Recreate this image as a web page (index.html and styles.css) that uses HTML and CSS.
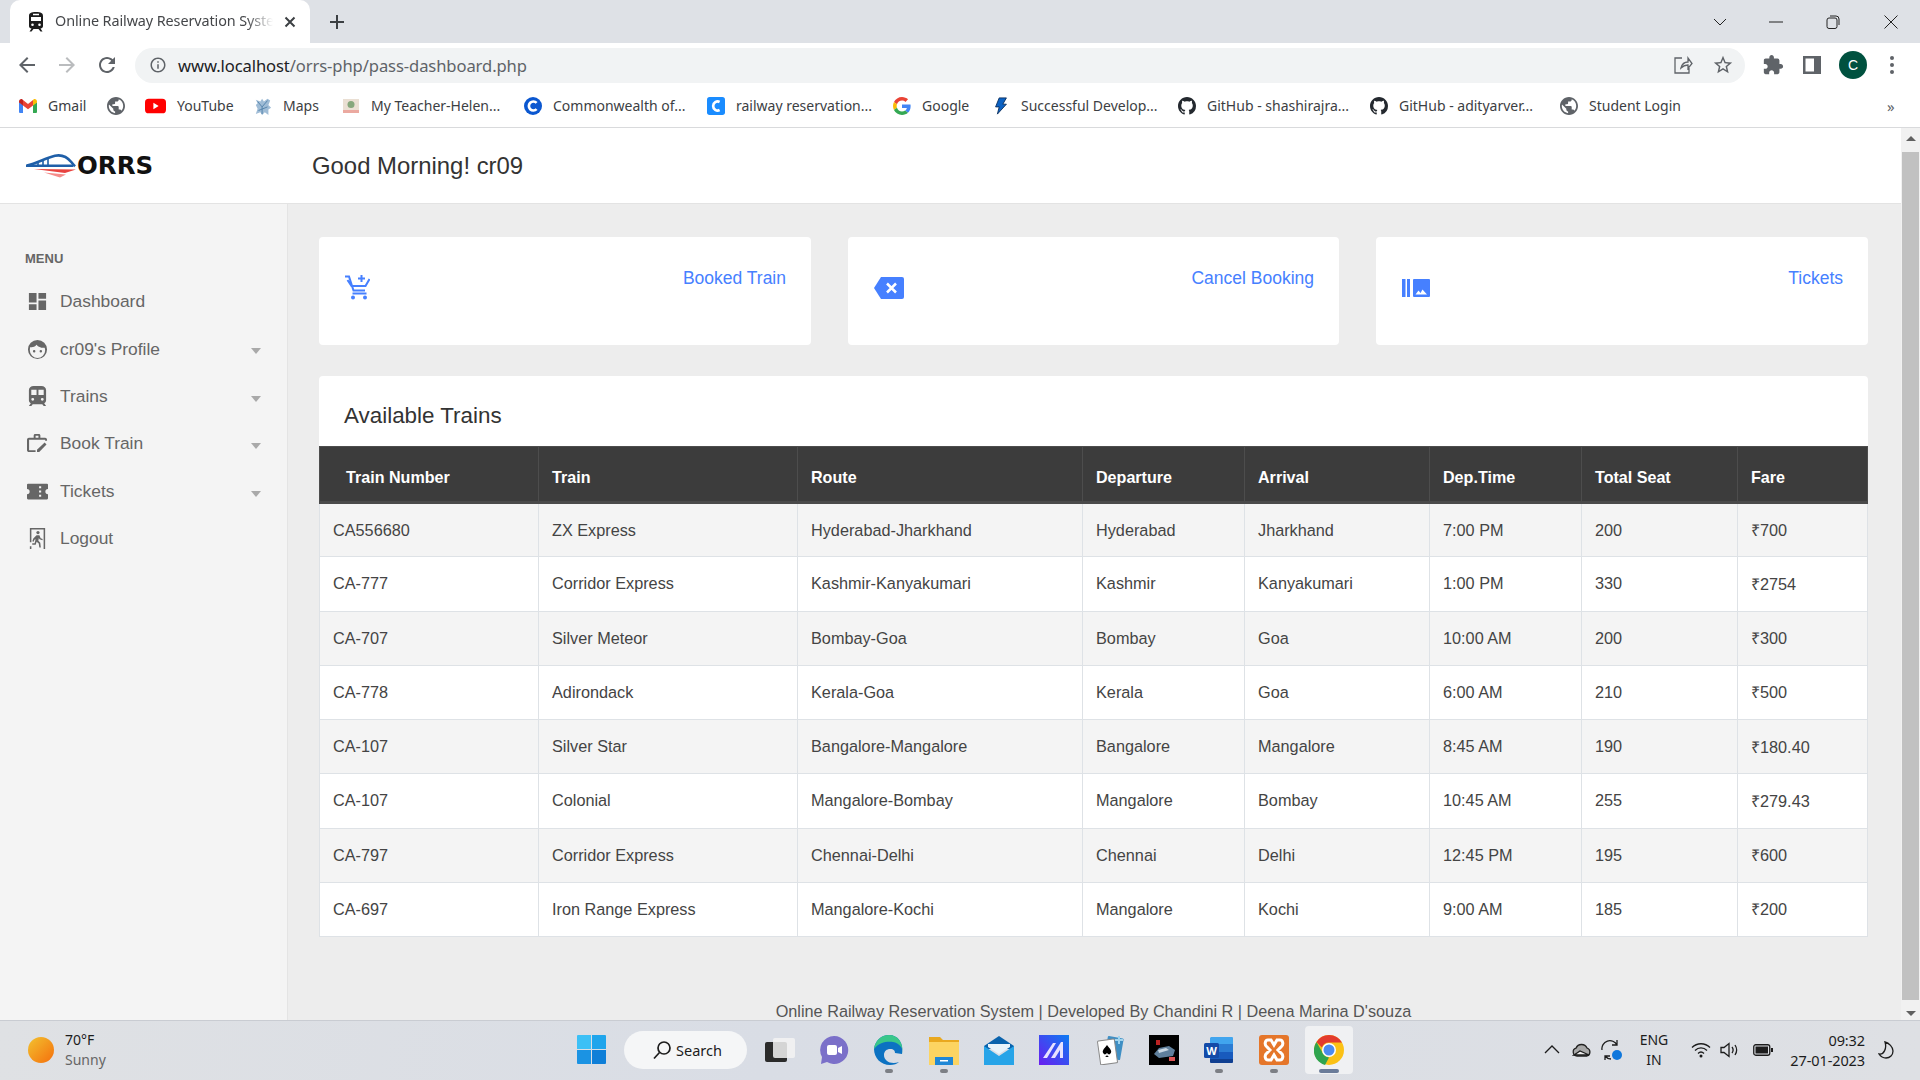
FILE: index.html
```html
<!DOCTYPE html>
<html>
    <head>
        <title>Online Railway Reservation System</title>
        <meta charset="UTF-8">
        <link rel="stylesheet" href="styles.css">
    </head>
    <body>
        <svg class="defs" width="0" height="0">
            <symbol id="globe" viewBox="2 2 20 20"><path d="M12 2C6.48 2 2 6.48 2 12s4.48 10 10 10 10-4.48 10-10S17.52 2 12 2zm-1 17.93c-3.95-.49-7-3.85-7-7.93 0-.62.08-1.21.21-1.79L9 15v1c0 1.1.9 2 2 2v1.93zm6.9-2.54c-.26-.81-1-1.39-1.9-1.39h-1v-3c0-.55-.45-1-1-1H8v-2h2c.55 0 1-.45 1-1V7h2c1.1 0 2-.9 2-2v-.41c2.93 1.19 5 4.06 5 7.41 0 2.08-.8 3.97-2.1 5.39z"/></symbol>
            <symbol id="github" viewBox="0 0 16 16"><path d="M8 0C3.58 0 0 3.58 0 8c0 3.54 2.29 6.53 5.47 7.59.4.07.55-.17.55-.38 0-.19-.01-.82-.01-1.49-2.01.37-2.53-.49-2.69-.94-.09-.23-.48-.94-.82-1.13-.28-.15-.68-.52-.01-.53.63-.01 1.08.58 1.23.82.72 1.21 1.87.87 2.33.66.07-.52.28-.87.51-1.07-1.78-.2-3.64-.89-3.64-3.95 0-.87.31-1.59.82-2.15-.08-.2-.36-1.02.08-2.12 0 0 .67-.21 2.2.82.64-.18 1.32-.27 2-.27.68 0 1.36.09 2 .27 1.53-1.04 2.2-.82 2.2-.82.44 1.1.16 1.92.08 2.12.51.56.82 1.27.82 2.15 0 3.07-1.87 3.75-3.65 3.95.29.25.54.73.54 1.48 0 1.07-.01 1.93-.01 2.2 0 .21.15.46.55.38A8.013 8.013 0 0016 8c0-4.42-3.58-8-8-8z"/></symbol>
        </svg>

        <div class="tabstrip">
            <div class="tab">
                <svg class="favicon" viewBox="0 0 16 20"><path d="M8 0C3 0 1 1 1 4v10c0 1.5 1 2.5 2.5 2.5L1.5 19.5h2L5.500 17h5l2 2.500h2L12.500 16.500C14 16.500 15 15.500 15 14V4c0-3-2-4-7-4zM3 5h10v4H3zm1.500 6.500a1.300 1.300 0 1 1 0 2.600 1.300 1.300 0 0 1 0-2.600zm7 0a1.300 1.300 0 1 1 0 2.600 1.300 1.300 0 0 1 0-2.600zM5 1.800h6v1.500H5z" fill-rule="evenodd"/></svg>
                <span class="tab-title">Online Railway Reservation System</span>
                <svg class="tab-close" viewBox="0 0 12 12"><path d="M1.500 1.500l9 9m0-9l-9 9"/></svg>
            </div>
            <svg class="new-tab" viewBox="0 0 14 14"><path d="M7 0v14M0 7h14"/></svg>
            <div class="window-controls">
                <svg class="win-chevron" viewBox="0 0 14 8"><path d="M1 1l6 6 6-6"/></svg>
                <svg class="win-min" viewBox="0 0 14 2"><path d="M0 1h14"/></svg>
                <svg class="win-max" viewBox="0 0 14 14"><rect x="1" y="3" width="10" height="10.500" rx="2"/><path d="M4 1h6a3 3 0 0 1 3 3v6"/></svg>
                <svg class="win-close" viewBox="0 0 14 14"><path d="M.5.500l13 13m0-13l-13 13"/></svg>
            </div>
        </div>

        <div class="toolbar">
            <svg class="nav-icon" viewBox="0 0 24 24"><path d="M20 11H7.830l5.590-5.590L12 4l-8 8 8 8 1.410-1.410L7.830 13H20v-2z"/></svg>
            <svg class="nav-icon nav-off" viewBox="0 0 24 24"><path d="M12 4l-1.410 1.410L16.170 11H4v2h12.170l-5.580 5.590L12 20l8-8z"/></svg>
            <svg class="nav-icon" viewBox="0 0 24 24"><path d="M17.650 6.350C16.200 4.900 14.210 4 12 4c-4.420 0-7.990 3.580-7.990 8s3.570 8 7.990 8c3.730 0 6.840-2.550 7.730-6h-2.080c-.82 2.330-3.040 4-5.650 4-3.310 0-6-2.690-6-6s2.690-6 6-6c1.660 0 3.140.69 4.220 1.780L13 11h7V4l-2.350 2.350z"/></svg>
            <div class="omnibox">
                <svg class="omni-info" viewBox="0 0 24 24"><path d="M11 7h2v2h-2zm0 4h2v6h-2zm1-9C6.480 2 2 6.480 2 12s4.480 10 10 10 10-4.480 10-10S17.520 2 12 2zm0 18c-4.410 0-8-3.590-8-8s3.590-8 8-8 8 3.590 8 8-3.590 8-8 8z"/></svg>
                <span class="url"><b>www.localhost</b>/orrs-php/pass-dashboard.php</span>
                <svg class="omni-share" viewBox="0 0 20 20"><path d="M9 3H2v15h14v-5M8 13c1-4 4-6 7-6V3l4 5.500-4 5V10c-3 0-5 1-7 3z"/></svg>
                <svg class="omni-star" viewBox="0 0 24 24"><path d="M22 9.240l-7.190-.62L12 2 9.190 8.630 2 9.240l5.460 4.730L5.820 21 12 17.270 18.180 21l-1.630-7.030L22 9.240zM12 15.400l-3.760 2.270 1-4.280-3.320-2.880 4.380-.38L12 6.100l1.710 4.040 4.380.38-3.320 2.880 1 4.280L12 15.400z"/></svg>
            </div>
            <svg class="tool-puzzle" viewBox="0 0 24 24"><path d="M20.500 11H19V7c0-1.100-.9-2-2-2h-4V3.500C13 2.120 11.880 1 10.500 1S8 2.120 8 3.500V5H4c-1.100 0-1.990.9-1.990 2v3.800H3.500c1.490 0 2.700 1.210 2.700 2.700s-1.210 2.700-2.700 2.700H2V20c0 1.100.9 2 2 2h3.800v-1.500c0-1.490 1.210-2.700 2.700-2.700 1.490 0 2.700 1.210 2.700 2.700V22H17c1.100 0 2-.9 2-2v-4h1.500c1.380 0 2.500-1.120 2.500-2.500S21.880 11 20.500 11z"/></svg>
            <svg class="tool-panel" viewBox="0 0 18 18"><path d="M0 0h18v18H0zM2.500 2.500v13H11v-13z" fill-rule="evenodd"/></svg>
            <div class="avatar">C</div>
            <div class="tool-dots"><i></i><i></i><i></i></div>
        </div>

        <div class="bookmarks">
            <a class="mark mark-gmail"><svg viewBox="0 0 18 14"><path fill="#4285f4" d="M0 3v10a1 1 0 0 0 1 1h3V6z"/><path fill="#34a853" d="M14 6v8h3a1 1 0 0 0 1-1V3z"/><path fill="#ea4335" d="M4 6.500V1L9 5l5-4v5.500L9 10.300z"/><path fill="#c5221f" d="M0 2.500C0 .6 2 -.5 3.500.5L4 1v5.500L0 3.500z"/><path fill="#fbbc04" d="M18 2.500c0-1.900-2-3-3.500-2L14 1v5.500l4-3z"/></svg><span>Gmail</span></a>
            <a class="mark mark-globe"><svg class="ico-globe"><use href="#globe"/></svg></a>
            <a class="mark mark-yt"><svg viewBox="0 0 20 14"><rect width="20" height="14" rx="3.500" fill="#f00"/><path fill="#fff" d="M8 4l5 3-5 3z"/></svg><span>YouTube</span></a>
            <a class="mark mark-maps"><svg viewBox="0 0 20 20"><path fill="#9fbcd6" d="M2 3l5 2 2-3 2 3 4-3 3 2-2 5 3 3-3 2v6l-4-3-3 3-2-3-5 2 2-6-2-4 2-2z"/><path stroke="#4f7fa8" fill="none" d="M4 5l5 6 6-7M9 11v8M5 15l10-4"/></svg><span>Maps</span></a>
            <a class="mark mark-teacher"><svg viewBox="0 0 18 18"><rect x="1" y="2" width="16" height="14" fill="#eadfd3"/><rect x="1" y="13" width="16" height="3" fill="#eba9a0"/><circle cx="9" cy="7.500" r="3.500" fill="#86a77c"/></svg><span>My Teacher-Helen...</span></a>
            <a class="mark mark-cw"><svg viewBox="0 0 20 20"><circle cx="10" cy="10" r="10" fill="#0b57d0"/><path fill="none" stroke="#fff" stroke-width="3" d="M14 6.500a5 5 0 1 0 0 7"/></svg><span>Commonwealth of...</span></a>
            <a class="mark mark-rail"><svg viewBox="0 0 20 20"><rect width="20" height="20" rx="3" fill="#1a8cff"/><path fill="none" stroke="#fff" stroke-width="3" d="M14 5.500a5 5 0 1 0 0 9"/></svg><span>railway reservation...</span></a>
            <a class="mark mark-google"><svg viewBox="0 0 48 48"><path fill="#ea4335" d="M24 9.500c3.540 0 6.710 1.220 9.210 3.600l6.850-6.850C35.900 2.380 30.470 0 24 0 14.620 0 6.510 5.380 2.560 13.220l7.980 6.190C12.430 13.720 17.740 9.500 24 9.500z"/><path fill="#4285f4" d="M46.980 24.550c0-1.570-.15-3.090-.38-4.550H24v9.020h12.940c-.58 2.960-2.260 5.480-4.780 7.180l7.730 6c4.510-4.180 7.090-10.360 7.090-17.650z"/><path fill="#fbbc05" d="M10.530 28.590c-.48-1.450-.76-2.990-.76-4.590s.27-3.140.76-4.590l-7.980-6.190C.92 16.460 0 20.120 0 24c0 3.880.92 7.540 2.560 10.780l7.970-6.190z"/><path fill="#34a853" d="M24 48c6.480 0 11.930-2.130 15.890-5.810l-7.730-6c-2.150 1.450-4.920 2.300-8.160 2.300-6.260 0-11.570-4.220-13.470-9.910l-7.980 6.190C6.510 42.620 14.620 48 24 48z"/></svg><span>Google</span></a>
            <a class="mark mark-bolt"><svg viewBox="0 0 14 20"><path fill="#0b62c4" stroke="#0a2e5c" d="M5 1h8L9 8h4L3 19l2-8H1z"/></svg><span>Successful Develop...</span></a>
            <a class="mark mark-gh"><svg class="ico-gh"><use href="#github"/></svg><span>GitHub - shashirajra...</span></a>
            <a class="mark mark-gh2"><svg class="ico-gh"><use href="#github"/></svg><span>GitHub - adityarver...</span></a>
            <a class="mark mark-student"><svg class="ico-globe"><use href="#globe"/></svg><span>Student Login</span></a>
            <span class="more">»</span>
        </div>

        <div class="page">
            <div class="viewport">
                <header class="topbar">
                    <div class="logo">
                        <svg class="logo-train" viewBox="0 0 54 24">
                            <path fill="none" stroke="#1f5fa8" stroke-width="2.6" d="M1 11.500C11 9 20 4 29 1.800c7-1.500 12 1 16.500 6.500 1.300 1.700 2.500 3 3.500 4"/>
                            <path fill="none" stroke="#1f5fa8" stroke-width="2.4" d="M0 11.800h47"/>
                            <path fill="none" stroke="#1f5fa8" stroke-width="1.600" d="M7 9v3M12 7v5M17 5v7M22 3.500V12"/>
                            <path fill="#e8423f" d="M8 15l42 .5-11 3.500z"/>
                            <path fill="#f58c8a" d="M18 18.500l22 2-6 3z"/>
                        </svg>
                        <span class="logo-text">ORRS</span>
                    </div>
                    <h2 class="greeting">Good Morning! cr09</h2>
                </header>
                <div class="layout">
                    <aside class="sidebar">
                        <h5 class="menu-title">MENU</h5>
                        <a class="side-link">
                            <svg class="side-icon" viewBox="1 1 22 22"><path d="M3 13h8V3H3v10zm0 8h8v-6H3v6zm10 0h8V11h-8v10zm0-18v6h8V3h-8z"/></svg>
                            <span>Dashboard</span>
                        </a>
                        <a class="side-link has-sub">
                            <svg class="side-icon" viewBox="0 0 22 22"><path fill-rule="evenodd" d="M11 1a10 10 0 1 0 0 20 10 10 0 0 0 0-20zm-8 10c0-1 .2-1.800.5-2.600C5 9 8 8.500 10 6c2 2.500 5 3.500 8.500 3.200.3.900.5 1.800.5 2.800a8 8 0 0 1-16 0zm4.500.500a1.300 1.300 0 1 0 0 2.600 1.300 1.300 0 0 0 0-2.600zm7 0a1.300 1.300 0 1 0 0 2.600 1.300 1.300 0 0 0 0-2.600z"/></svg>
                            <span>cr09's Profile</span>
                        </a>
                        <a class="side-link has-sub">
                            <svg class="side-icon" viewBox="0 0 20 22"><path fill-rule="evenodd" d="M6 0h8c3 0 5 2 5 4.500V15c0 1.500-.8 2.500-2 3l2 3h-2.500L15 19H5l-1.500 2H1l2-3c-1.200-.5-2-1.500-2-3V4.500C1 2 3 0 6 0zM3.500 4v5.500h5.500V4zm7.500 0v5.500h5.500V4zM5 12.500a1.500 1.500 0 1 0 0 3 1.500 1.500 0 0 0 0-3zm10 0a1.500 1.500 0 1 0 0 3 1.500 1.500 0 0 0 0-3z"/></svg>
                            <span>Trains</span>
                        </a>
                        <a class="side-link has-sub">
                            <svg class="side-icon" viewBox="0 0 22 20"><path fill-rule="evenodd" d="M7 1.500C7 .7 7.700 0 8.500 0h4c.8 0 1.500.7 1.500 1.500V4h5c1 0 2 1 2 2v1h-2V6H2.200v11H9v2H2c-1 0-2-1-2-2V6c0-1 1-2 2-2h5zM9 2v2h3V2z"/><path d="M19.500 9.500l2 2-8 8H11v-2.500z" transform="translate(0 -.5) scale(.95 1)"/></svg>
                            <span>Book Train</span>
                        </a>
                        <a class="side-link has-sub">
                            <svg class="side-icon" viewBox="0 0 20 15"><path fill-rule="evenodd" d="M1 0h18a1 1 0 0 1 1 1v4a2.500 2.500 0 0 0 0 5v4a1 1 0 0 1-1 1H1a1 1 0 0 1-1-1v-4a2.500 2.500 0 0 0 0-5V1a1 1 0 0 1 1-1zm10.500 2.500v2h2v-2zm0 4v2h2v-2zm0 4v2h2v-2z"/></svg>
                            <span>Tickets</span>
                        </a>
                        <a class="side-link">
                            <svg class="side-icon" viewBox="0 0 18 22"><path d="M1 0h16v22h-1.600V1.600H2.600V15H1zM1 19h1.600v3H1z"/><circle cx="9.500" cy="4.800" r="1.700"/><path d="M8 7.500l3 .2 1.300 3 2.200.8-.4 1.300-3-1-.7-1.200-.5 2.800 2 2 .6 5h-1.600l-.6-4.200-2.200-1.700-1 3H3.500v-1.500H6l1-4.300-1.200.5-.8 2.300-1.400-.5 1-3z"/></svg>
                            <span>Logout</span>
                        </a>
                    </aside>
                    <main class="content">
                        <div class="cards">
                            <div class="card">
                                <svg class="card-cart" viewBox="0 0 25 25"><path d="M0 1.500h4l4.500 14h11.500M2.500 5l4 6h14l4-7M16.500 0v7M13 3.500h7M7.500 18.500h14"/><circle cx="8" cy="22.500" r="2"/><circle cx="20" cy="22.500" r="2"/></svg>
                                <a class="card-link">Booked Train</a>
                            </div>
                            <div class="card">
                                <svg class="card-back" viewBox="0 0 30 22"><path class="fill" d="M7 0h21a2 2 0 0 1 2 2v18a2 2 0 0 1-2 2H7L0 11z"/><path class="cross" d="M13 6.500l9 9m0-9l-9 9"/></svg>
                                <a class="card-link">Cancel Booking</a>
                            </div>
                            <div class="card">
                                <svg class="card-tickets" viewBox="0 0 28 18"><path class="fill" d="M0 0h3.500v18H0zM5 0h3v18H5zM11 1a1 1 0 0 1 1-1h15a1 1 0 0 1 1 1v16a1 1 0 0 1-1 1H12a1 1 0 0 1-1-1z"/><path class="peak" d="M13.500 15.500l3-4 2 2.500 2-3.500 4.500 5z"/></svg>
                                <a class="card-link">Tickets</a>
                            </div>
                        </div>
                        <section class="panel">
                            <h4 class="panel-title">Available Trains</h4>
                            <table class="trains">
                                <colgroup>
                                    <col class="c-number"><col class="c-train"><col class="c-route"><col class="c-dep">
                                    <col class="c-arr"><col class="c-time"><col class="c-seat"><col class="c-fare">
                                </colgroup>
                                <thead>
                                    <tr><th class="first">Train Number</th><th>Train</th><th>Route</th><th>Departure</th><th>Arrival</th><th>Dep.Time</th><th>Total Seat</th><th>Fare</th></tr>
                                </thead>
                                <tbody>
                                    <tr><td>CA556680</td><td>ZX Express</td><td>Hyderabad-Jharkhand</td><td>Hyderabad</td><td>Jharkhand</td><td>7:00 PM</td><td>200</td><td>₹700</td></tr>
                                    <tr><td>CA-777</td><td>Corridor Express</td><td>Kashmir-Kanyakumari</td><td>Kashmir</td><td>Kanyakumari</td><td>1:00 PM</td><td>330</td><td>₹2754</td></tr>
                                    <tr><td>CA-707</td><td>Silver Meteor</td><td>Bombay-Goa</td><td>Bombay</td><td>Goa</td><td>10:00 AM</td><td>200</td><td>₹300</td></tr>
                                    <tr><td>CA-778</td><td>Adirondack</td><td>Kerala-Goa</td><td>Kerala</td><td>Goa</td><td>6:00 AM</td><td>210</td><td>₹500</td></tr>
                                    <tr><td>CA-107</td><td>Silver Star</td><td>Bangalore-Mangalore</td><td>Bangalore</td><td>Mangalore</td><td>8:45 AM</td><td>190</td><td>₹180.40</td></tr>
                                    <tr><td>CA-107</td><td>Colonial</td><td>Mangalore-Bombay</td><td>Mangalore</td><td>Bombay</td><td>10:45 AM</td><td>255</td><td>₹279.43</td></tr>
                                    <tr><td>CA-797</td><td>Corridor Express</td><td>Chennai-Delhi</td><td>Chennai</td><td>Delhi</td><td>12:45 PM</td><td>195</td><td>₹600</td></tr>
                                    <tr><td>CA-697</td><td>Iron Range Express</td><td>Mangalore-Kochi</td><td>Mangalore</td><td>Kochi</td><td>9:00 AM</td><td>185</td><td>₹200</td></tr>
                                </tbody>
                            </table>
                        </section>
                        <footer class="foot">Online Railway Reservation System | Developed By Chandini R | Deena Marina D'souza</footer>
                    </main>
                </div>
            </div>
            <div class="scrollbar">
                <i class="arrow-up"></i>
                <div class="thumb"></div>
                <i class="arrow-down"></i>
            </div>
        </div>

        <div class="taskbar">
            <div class="weather">
                <div class="sun"></div>
                <div class="weather-text"><span>70°F</span><span class="dim">Sunny</span></div>
            </div>
            <div class="apps">
                <svg class="start" viewBox="0 0 29 29"><path fill="#3cc0f6" d="M0 1a1 1 0 0 1 1-1h13v14H0z"/><path fill="#1fa5ec" d="M15 0h13a1 1 0 0 1 1 1v13H15z"/><path fill="#1b93e3" d="M0 15h14v14H1a1 1 0 0 1-1-1z"/><path fill="#0f7fd8" d="M15 15h14v13a1 1 0 0 1-1 1H15z"/></svg>
                <div class="search">
                    <svg viewBox="0 0 20 20"><circle cx="12" cy="8" r="6"/><path d="M7.500 12.500L2 18.500"/></svg>
                    <span>Search</span>
                </div>
                <svg class="app taskview" viewBox="0 0 30 24"><rect y="4" width="22" height="20" rx="2" fill="#2b2b2b"/><rect x="8" y="0" width="22" height="20" rx="2" fill="#f3f3f3" opacity=".85"/></svg>
                <svg class="app meet" viewBox="0 0 30 30"><path fill="#7b70c9" d="M15 1a14 14 0 1 1-7 26l-6 2 1-7A14 14 0 0 1 15 1z"/><rect x="8" y="10" width="10" height="10" rx="2" fill="#fff"/><path fill="#fff" d="M19 13l4-2v8l-4-2z"/></svg>
                <div class="app-slot on">
                    <svg class="app" viewBox="0 0 30 30"><path fill="#0c72c2" d="M15 0C7 0 1 6 0 14c0 9 7 16 16 16 4 0 7-1 9-3-8 3-15-1-15-7 0-4 3-6 6-6 4 0 5 2 5 4l7 1C30 8 24 0 15 0z"/><path fill="#39c78a" d="M15 0c9 0 15 8 13 19 2-6-3-11-9-12-5-1-14 0-19 7C1 6 7 0 15 0z"/></svg>
                </div>
                <div class="app-slot on">
                    <svg class="app" viewBox="0 0 30 30"><path fill="#e9a81f" d="M0 2h11l3 3h16v6H0z"/><path fill="#fcd462" d="M0 7h30v23H0z"/><path fill="#1f87d6" d="M6 22h18v8H6z"/><rect x="11" y="25" width="8" height="1.500" fill="#fff"/></svg>
                </div>
                <svg class="app" viewBox="0 0 30 30"><path fill="#0a63ad" d="M0 11L15 1l15 10v3H0z"/><path fill="#27a4e8" d="M0 11l15 10 15-10v19H0z"/><path fill="#e9f4fb" d="M4 9h22v3l-11 7-11-7z"/></svg>
                <svg class="app" viewBox="0 0 30 30"><defs><linearGradient id="mx" x1="0" y1="1" x2="1" y2="0"><stop offset="0" stop-color="#6a1df0"/><stop offset="1" stop-color="#0c7cf2"/></linearGradient></defs><rect width="30" height="30" fill="url(#mx)"/><path fill="#e8e2ff" d="M4 23L14 8h3L8 23zM12 23L22 7h2v16h-3v-8l-5 8z"/></svg>
                <svg class="app" viewBox="0 0 30 30"><rect x="12" y="2" width="16" height="22" rx="1" fill="#3f8fc4" transform="rotate(10 20 13)"/><rect x="5" y="5" width="17" height="24" rx="1" fill="#fff" stroke="#888" transform="rotate(-8 13 17)"/><path d="M13 10c3 4 6 6 3 9-1 1-2 0-3-1 0 2 0 3 2 4h-4c2-1 2-2 2-4-1 1-2 2-3 1-3-3 0-5 3-9z"/><path d="M25 1v8M21 5h8" stroke="#9fd4ef" stroke-width="2"/></svg>
                <svg class="app" viewBox="0 0 30 30"><rect width="30" height="30" fill="#000"/><path fill="#5f7f9c" d="M5 19l5-6 10-2 6 4-2 6-14 2z"/><path fill="#c9d7e3" d="M9 15l8-2 3 2-10 3z"/><rect x="7" y="5" width="4" height="5" fill="#b22"/><rect x="20" y="22" width="6" height="4" fill="#d55"/></svg>
                <div class="app-slot on">
                    <svg class="app" viewBox="0 0 30 30"><path fill="#41a5ee" d="M7 2h21a1 1 0 0 1 1 1v6H6V3z"/><path fill="#2b7cd3" d="M6 9h23v8H6z"/><path fill="#185abd" d="M6 17h23v7H6z"/><path fill="#103f91" d="M6 24h23v3a1 1 0 0 1-1 1H7a1 1 0 0 1-1-1z"/><rect x="0" y="8" width="15" height="15" rx="1.500" fill="#134aa8"/><text x="7.500" y="19.500" class="word-w">W</text></svg>
                </div>
                <div class="app-slot on">
                    <svg class="app" viewBox="0 0 30 30"><rect width="30" height="30" rx="3" fill="#e5762a"/><path fill="none" stroke="#fff" stroke-width="3" d="M9 5h3l3 5 3-5h3c3 0 4 5 1 7l-3 3 3 3c3 2 2 7-1 7h-3l-3-5-3 5H9c-3 0-4-5-1-7l3-3-3-3c-3-2-2-7 1-7z"/></svg>
                </div>
                <div class="app-slot active">
                    <svg class="app" viewBox="0 0 30 30"><circle cx="15" cy="15" r="15" fill="#fbc116"/><path fill="#e33b2e" d="M15 0a15 15 0 0 1 13 7.500H15a7.500 7.500 0 0 0-7 5L2.500 7A15 15 0 0 1 15 0z"/><path fill="#2fa44f" d="M2.500 7L9 18.500a7.500 7.500 0 0 0 6 4L11 30A15 15 0 0 1 2.500 7z"/><circle cx="15" cy="15" r="7" fill="#fff"/><circle cx="15" cy="15" r="5.500" fill="#4c8bf0"/></svg>
                </div>
            </div>
            <div class="tray">
                <svg class="tray-caret" viewBox="0 0 16 9"><path d="M1 8l7-7 7 7"/></svg>
                <svg class="tray-cloud" viewBox="0 0 20 14"><path fill="#a8a8a8" stroke="#222" d="M5 13a4 4 0 0 1-1-7.800 6 6 0 0 1 11-.2 4.200 4.200 0 0 1 0 8z"/><path fill="#eee" d="M2 12l6-4 9 4z"/></svg>
                <svg class="tray-sync" viewBox="0 0 22 22"><path d="M1 11a8 8 0 0 1 15-5M16 1v5h-5M4 21v-4h5M4 17a8 8 0 0 0 6 3"/><circle class="dot" cx="16" cy="16" r="5"/></svg>
                <div class="lang"><span>ENG</span><span>IN</span></div>
                <svg class="tray-wifi" viewBox="0 0 20 16"><path d="M1 5.500c5-5 13-5 18 0M4 8.500c3.500-3.500 8.500-3.500 12 0M7 11.500c2-2 4-2 6 0"/><circle class="wifi-dot" cx="10" cy="14" r="1.500"/></svg>
                <svg class="tray-vol" viewBox="0 0 20 16"><path d="M1 5.500h3l5-4v13l-5-4H1zM12 5c1.500 2 1.500 4 0 6M15 3c2 3 2 7 0 10"/></svg>
                <svg class="tray-bat" viewBox="0 0 20 12"><rect x=".75" y=".75" width="16" height="10.500" rx="2"/><rect class="bat-level" x="2.500" y="2.500" width="12.500" height="7"/><rect class="bat-level" x="18" y="4" width="2" height="4"/></svg>
                <div class="clock"><span>09:32</span><span>27-01-2023</span></div>
                <svg class="tray-moon" viewBox="0 0 16 18"><path d="M7 1c4 1 8 5 8 9s-3 7-7 7c-3 0-5-1-7-4 5 1 8-6 6-12z"/></svg>
            </div>
        </div>
    </body>
</html>
```

FILE: styles.css
```css
* {
    margin: 0;
    padding: 0;
    box-sizing: border-box;
}
body {
    width: 1920px;
    height: 1080px;
    overflow: hidden;
    display: flex;
    flex-direction: column;
    background-color: #fff;
    font-family: "Liberation Sans", Arial, sans-serif;
}
svg {
    display: block;
    flex: none;
}
.defs {
    position: absolute;
}

/* browser top */
.tabstrip {
    height: 43px;
    display: flex;
    align-items: center;
    background-color: #dee1e6;
    font-family: "Noto Sans", sans-serif;
}
.tab {
    width: 300px;
    height: 43px;
    margin-left: 10px;
    padding-left: 18px;
    display: flex;
    align-items: center;
    background-color: #fff;
    border-radius: 10px 10px 0 0;
}
.favicon {
    width: 16px;
    height: 20px;
    fill: #1b1b1b;
}
.tab-title {
    width: 218px;
    margin-left: 11px;
    padding-bottom: 2px;
    overflow: hidden;
    white-space: nowrap;
    font-size: 14.4px;
    letter-spacing: -0.1px;
    color: #45474a;
    -webkit-mask-image: linear-gradient(to right, #000 88%, transparent);
    mask-image: linear-gradient(to right, #000 88%, transparent);
}
.tab-close {
    width: 12px;
    height: 12px;
    margin-left: 11px;
    fill: none;
    stroke: #3c4043;
    stroke-width: 2;
}
.new-tab {
    width: 14px;
    height: 14px;
    margin-left: 20px;
    fill: none;
    stroke: #3c4043;
    stroke-width: 2;
}
.window-controls {
    margin-left: auto;
    display: flex;
    align-items: center;
    padding-right: 22px;
}
.window-controls svg {
    fill: none;
    stroke: #222;
    stroke-width: 1;
}
.win-chevron {
    width: 14px;
    height: 8px;
    margin-right: 42px;
}
.win-min {
    width: 14px;
    height: 2px;
    margin-right: 43px;
}
.win-max {
    width: 14px;
    height: 14px;
    margin-right: 44px;
}
.win-close {
    width: 14px;
    height: 14px;
}

.toolbar {
    height: 44px;
    display: flex;
    align-items: center;
    padding-left: 15px;
}
.nav-icon {
    width: 24px;
    height: 24px;
    margin-right: 16px;
    fill: #5f6368;
}
.nav-off {
    fill: #babcbe;
}
.omnibox {
    width: 1610px;
    height: 35px;
    padding-left: 14px;
    display: flex;
    align-items: center;
    border-radius: 18px;
    background-color: #f1f3f4;
    font-family: "Noto Sans", sans-serif;
}
.omni-info {
    width: 18px;
    height: 18px;
    fill: #5f6368;
}
.url {
    margin-left: 11px;
    font-size: 16.6px;
    letter-spacing: -0.1px;
    color: #5f6368;
}
.url b {
    font-weight: normal;
    color: #202124;
}
.omni-share {
    width: 20px;
    height: 20px;
    margin-left: auto;
    fill: none;
    stroke: #5f6368;
    stroke-width: 1.3;
}
.omni-star {
    width: 22px;
    height: 22px;
    margin: 0 11px 0 19px;
    fill: #5f6368;
}
.tool-puzzle {
    width: 22px;
    height: 22px;
    margin-left: 17px;
    fill: #5f6368;
}
.tool-panel {
    width: 18px;
    height: 18px;
    margin-left: 19px;
    fill: #5f6368;
}
.avatar {
    width: 28px;
    height: 28px;
    margin-left: 18px;
    border-radius: 50%;
    background-color: #00513f;
    color: #fff;
    font-size: 14px;
    line-height: 28px;
    text-align: center;
}
.tool-dots {
    margin-left: 23px;
    display: flex;
    flex-direction: column;
    gap: 3px;
}
.tool-dots i {
    width: 4px;
    height: 4px;
    border-radius: 50%;
    background-color: #5f6368;
}

.bookmarks {
    height: 41px;
    padding: 0 0 3px 19px;
    display: flex;
    align-items: center;
    border-bottom: 1px solid #d9dadc;
    font-family: "Noto Sans", sans-serif;
    font-size: 14px;
    color: #3c4043;
}
.mark {
    display: flex;
    align-items: center;
    gap: 11px;
    white-space: nowrap;
}
.mark svg {
    width: 18px;
    height: 18px;
}
.ico-globe {
    fill: #5f6368;
}
.ico-gh {
    fill: #24292f;
}
.mark-gmail { width: 88px; }
.mark-globe { width: 38px; }
.mark-yt { width: 109px; }
.mark-yt svg { width: 21px; }
.mark-maps { width: 88px; }
.mark-teacher { width: 182px; }
.mark-cw { width: 183px; }
.mark-rail { width: 186px; }
.mark-google { width: 99px; }
.mark-bolt { width: 186px; }
.mark-gh { width: 192px; }
.mark-gh2 { width: 190px; }
.mark-student { width: 327px; }
.more {
    font-size: 15px;
    color: #5f6368;
}

/* site */
.page {
    height: 892px;
    display: flex;
}
.viewport {
    width: 1901px;
    display: flex;
    flex-direction: column;
    overflow: hidden;
}
.topbar {
    height: 76px;
    flex: none;
    display: flex;
    align-items: center;
    background-color: #fff;
    border-bottom: 1px solid #e3e3e3;
}
.logo {
    width: 312px;
    padding-left: 26px;
    display: flex;
    align-items: center;
}
.logo-train {
    width: 54px;
    height: 24px;
}
.logo-text {
    margin-left: -3px;
    font-family: "DejaVu Sans", sans-serif;
    font-size: 24.5px;
    font-weight: bold;
    line-height: 26px;
    color: #111;
}
.greeting {
    padding-top: 1px;
    font-size: 23.9px;
    font-weight: normal;
    color: #333;
}
.layout {
    flex: 1;
    display: flex;
    min-height: 0;
}
.sidebar {
    width: 288px;
    flex: none;
    padding: 47px 0 0 25px;
    background-color: #f4f4f4;
    border-right: 1px solid #e4e4e4;
}
.menu-title {
    height: 27px;
    font-size: 13px;
    line-height: 16px;
    font-weight: bold;
    color: #666;
}
.side-link {
    position: relative;
    height: 47.4px;
    display: flex;
    align-items: center;
    gap: 12px;
    font-size: 17.4px;
    color: #666;
}
.side-icon {
    width: 21px;
    height: 21px;
    margin-left: 2px;
    fill: #666;
}
.has-sub::after {
    content: "";
    position: absolute;
    left: 226px;
    top: 23px;
    border-left: 5.5px solid transparent;
    border-right: 5.5px solid transparent;
    border-top: 6px solid #a9a9a9;
}
.content {
    flex: 1;
    padding: 33px 33px 0 31px;
    background-color: #ededed;
    min-width: 0;
}
.cards {
    display: grid;
    grid-template-columns: 492px 491px 492px;
    gap: 37px;
}
.card {
    height: 108px;
    padding: 30px 25px 0 26px;
    display: flex;
    justify-content: space-between;
    align-items: flex-start;
    background-color: #fff;
    border-radius: 4px;
}
.card-link {
    font-size: 17.5px;
    line-height: 22px;
    color: #4680ff;
}
.card-cart {
    width: 25px;
    height: 25px;
    margin-top: 8px;
    fill: none;
    stroke: #4680ff;
    stroke-width: 2;
}
.card-cart circle {
    fill: #4680ff;
    stroke: none;
}
.card-back {
    width: 30px;
    height: 22px;
    margin-top: 10px;
}
.card-tickets {
    width: 28px;
    height: 18px;
    margin-top: 12px;
}
.fill {
    fill: #4680ff;
}
.cross {
    fill: none;
    stroke: #fff;
    stroke-width: 2.5;
}
.peak {
    fill: #fff;
}
.panel {
    margin-top: 31px;
    background-color: #fff;
    border-radius: 4px 4px 0 0;
}
.panel-title {
    height: 70px;
    padding: 25px 0 0 25px;
    font-size: 22.4px;
    line-height: 30px;
    font-weight: normal;
    color: #333;
}
.trains {
    width: 100%;
    table-layout: fixed;
    border-collapse: collapse;
    font-size: 16.25px;
    color: #444;
}
.c-number { width: 219px; }
.c-train { width: 259px; }
.c-route { width: 285px; }
.c-dep { width: 162px; }
.c-arr { width: 185px; }
.c-time { width: 152px; }
.c-seat { width: 156px; }
.trains th {
    height: 56px;
    padding: 7px 13px 0;
    text-align: left;
    font-size: 16.1px;
    color: #fff;
    background-color: #3c3c3c;
    border: 1px solid #4d4d4d;
    border-bottom: 3px solid #4a4a4a;
}
.trains th.first {
    padding-left: 26px;
}
.trains td {
    height: 54.25px;
    padding: 0 13px;
    border: 1px solid #dee2e6;
}
.trains tbody tr:nth-child(odd) {
    background-color: #f4f4f4;
}
.foot {
    margin-top: 63px;
    font-size: 16.25px;
    line-height: 22px;
    color: #555;
    text-align: center;
    white-space: nowrap;
}
.scrollbar {
    width: 19px;
    display: flex;
    flex-direction: column;
    align-items: center;
    background-color: #f1f1f1;
}
.thumb {
    width: 17px;
    height: 848px;
    margin: 11px 0 11px;
    background-color: #c1c1c1;
}
.arrow-up {
    margin-top: 8px;
    border-left: 5px solid transparent;
    border-right: 5px solid transparent;
    border-bottom: 5px solid #606060;
}
.arrow-down {
    border-left: 5px solid transparent;
    border-right: 5px solid transparent;
    border-top: 5px solid #606060;
}

/* windows taskbar */
.taskbar {
    height: 60px;
    flex: none;
    padding-bottom: 2px;
    display: flex;
    align-items: center;
    background: linear-gradient(100deg, #dfe1e4, #d9dde5 40%, #dee0e4);
    border-top: 1px solid #c9ccd2;
    font-family: "Noto Sans", sans-serif;
    color: #1c1c1c;
}
.weather {
    width: 577px;
    padding-left: 28px;
    display: flex;
    align-items: center;
    gap: 11px;
}
.sun {
    width: 26px;
    height: 26px;
    border-radius: 50%;
    background: linear-gradient(135deg, #f2c230, #f56f0c);
}
.weather-text {
    display: flex;
    flex-direction: column;
    font-size: 14px;
    line-height: 20px;
}
.dim {
    color: #666;
}
.apps {
    display: flex;
    align-items: center;
}
.start {
    width: 29px;
    height: 29px;
}
.search {
    width: 123px;
    height: 38px;
    margin: 0 18px;
    padding-left: 28px;
    display: flex;
    align-items: center;
    gap: 4px;
    border-radius: 19px;
    background-color: #f5f6f7;
    font-size: 14.5px;
}
.search svg {
    width: 20px;
    height: 20px;
    fill: none;
    stroke: #1c1c1c;
    stroke-width: 1.7;
}
.app {
    width: 30px;
    height: 30px;
}
.apps > .app {
    margin-right: 25px;
}
.apps > .taskview {
    margin-right: 24px;
}
.app-slot {
    position: relative;
    width: 30px;
    margin-right: 25px;
}
.app-slot.on::after {
    content: "";
    position: absolute;
    left: 11px;
    bottom: -8px;
    width: 8px;
    height: 4px;
    border-radius: 2px;
    background-color: #7c7f85;
}
.app-slot.active {
    margin-right: 0;
}
.app-slot.active::before {
    content: "";
    position: absolute;
    left: -9px;
    top: -9px;
    width: 48px;
    height: 48px;
    border-radius: 4px;
    background-color: #f0f1f3;
}
.app-slot.active::after {
    content: "";
    position: absolute;
    left: 5px;
    bottom: -8px;
    width: 20px;
    height: 4px;
    border-radius: 2px;
    background-color: #6a7b99;
}
.app-slot.active svg {
    position: relative;
}
.word-w {
    font-size: 11px;
    font-weight: bold;
    fill: #fff;
    text-anchor: middle;
}
.tray {
    margin-left: 200px;
    display: flex;
    align-items: center;
    font-size: 14px;
}
.tray svg {
    fill: none;
    stroke: #1c1c1c;
    stroke-width: 1.3;
}
.tray-caret {
    width: 16px;
    height: 9px;
}
.tray-cloud {
    width: 20px;
    height: 14px;
    margin-left: 12px;
}
.tray-sync {
    width: 22px;
    height: 22px;
    margin-left: 9px;
}
.tray .dot {
    fill: #0f77dc;
    stroke: none;
}
.lang {
    width: 50px;
    margin-left: 6px;
    display: flex;
    flex-direction: column;
    align-items: center;
    line-height: 20px;
}
.tray-wifi {
    width: 20px;
    height: 16px;
    margin-left: 12px;
}
.tray .wifi-dot {
    fill: #1c1c1c;
    stroke: none;
}
.tray-vol {
    width: 20px;
    height: 16px;
    margin-left: 9px;
}
.tray-bat {
    width: 20px;
    height: 12px;
    margin-left: 13px;
}
.tray .bat-level {
    fill: #1c1c1c;
    stroke: none;
}
.clock {
    width: 86px;
    margin-left: 6px;
    display: flex;
    flex-direction: column;
    align-items: flex-end;
    line-height: 20px;
    font-size: 14.5px;
    letter-spacing: -0.1px;
}
.tray-moon {
    width: 16px;
    height: 18px;
    margin-left: 13px;
}
```
